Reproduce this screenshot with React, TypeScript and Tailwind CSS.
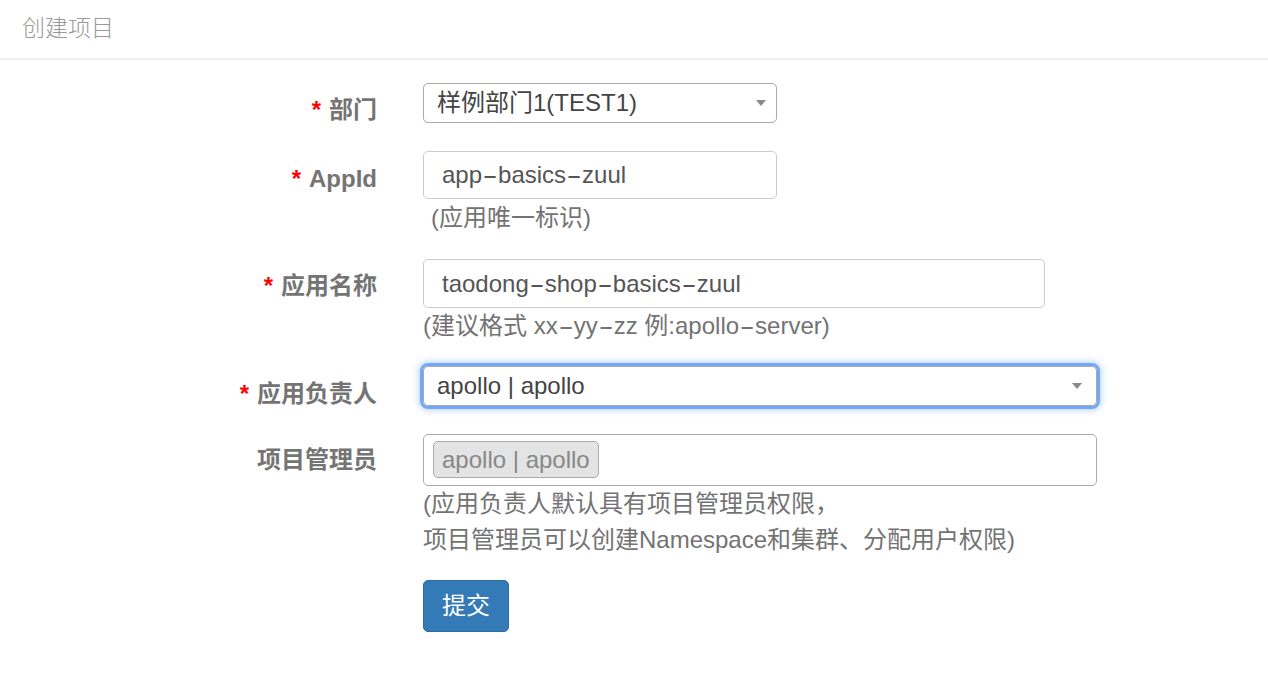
const font = { fontFamily: '"Liberation Sans", "Noto Sans CJK SC", sans-serif' };

// wide dashes, as the reference font draws its hyphens
function Dashy({ text }: { text: string }) {
  const parts = text.split("-");
  return (
    <>
      {parts.map((p, i) => (
        <span key={i}>
          {p}
          {i < parts.length - 1 && <span className="inline-block w-[16px] scale-x-[1.9] text-center">-</span>}
        </span>
      ))}
    </>
  );
}

function Label({ text, required }: { text: string; required?: boolean }) {
  return (
    <div className="w-[377px] shrink-0 text-right text-[24px] font-bold leading-[28px] text-[#747474]">
      {required && <span className="mr-[8px] text-[#f00]">*</span>}
      {text}
    </div>
  );
}

function Arrow() {
  return <span className="h-0 w-0 border-x-[5px] border-t-[6px] border-x-transparent border-t-[#888]" />;
}

function Help({ children }: { children: React.ReactNode }) {
  return <p className="text-[24px] leading-[28px] text-[#737373]">{children}</p>;
}

export default function App() {
  return (
    <div className="min-h-screen bg-white" style={font}>
      <div className="flex h-[60px] items-center border-b-2 border-[#eef0f4] pl-[22px] pb-[2px]">
        <h1 className="text-[23px] font-light text-[#999]">创建项目</h1>
      </div>

      <form className="flex flex-col pt-[23px]">
        <div className="flex">
          <div className="pt-[13px]">
            <Label text="部门" required />
          </div>
          <div className="ml-[46px]">
            <div className="flex h-[40px] w-[354px] items-center justify-between rounded-[5px] border border-[#aaa] pl-[13px] pr-[10px] text-[24px] text-[#444]">
              <span>样例部门1(TEST1)</span>
              <Arrow />
            </div>
          </div>
        </div>

        <div className="mt-[27px] flex">
          <div className="pt-[14px]">
            <Label text="AppId" required />
          </div>
          <div className="ml-[46px]">
            <div className="flex h-[48px] w-[354px] items-center rounded-[5px] border border-[#ccc] pl-[18px] text-[24px] text-[#555]">
              <Dashy text="app-basics-zuul" />
            </div>
            <div className="mt-[5px] pl-[8px]">
              <Help>(应用唯一标识)</Help>
            </div>
          </div>
        </div>

        <div className="mt-[27px] flex">
          <div className="pt-[13px]">
            <Label text="应用名称" required />
          </div>
          <div className="ml-[46px]">
            <div className="flex h-[49px] w-[622px] items-center rounded-[5px] border border-[#ccc] pl-[18px] text-[24px] text-[#555]">
              <Dashy text="taodong-shop-basics-zuul" />
            </div>
            <div className="mt-[4px]">
              <Help>
                (建议格式 <Dashy text="xx-yy-zz" /> 例:<Dashy text="apollo-server" />)
              </Help>
            </div>
          </div>
        </div>

        <div className="mt-[26px] flex">
          <div className="pt-[14px]">
            <Label text="应用负责人" required />
          </div>
          <div className="ml-[46px]">
            <div className="flex h-[40px] w-[674px] items-center justify-between rounded-[5px] border border-[#aaa] pl-[13px] pr-[14px] text-[24px] text-[#444] shadow-[0_0_0_3px_rgba(100,160,245,0.85),0_0_6px_4px_rgba(100,160,245,0.5)]">
              <span>apollo | apollo</span>
              <Arrow />
            </div>
          </div>
        </div>

        <div className="mt-[26px] flex">
          <div className="pt-[12px]">
            <Label text="项目管理员" />
          </div>
          <div className="ml-[46px]">
            <div className="flex h-[52px] w-[674px] items-start rounded-[5px] border border-[#aaa] pl-[9px] pt-[6px]">
              <span className="flex h-[37px] items-center rounded-[5px] border border-[#aaa] bg-[#e4e4e4] px-[8px] text-[24px] text-[#888]">
                apollo | apollo
              </span>
            </div>
            <p className="text-[24px] leading-[36px] text-[#737373]">
              (应用负责人默认具有项目管理员权限，
              <br />
              项目管理员可以创建Namespace和集群、分配用户权限)
            </p>
            <button
              type="button"
              className="mt-[22px] flex h-[52px] w-[86px] items-center justify-center rounded-[5px] border border-[#2e6da4] bg-[#337ab7] text-[24px] text-white"
            >
              提交
            </button>
          </div>
        </div>
      </form>
    </div>
  );
}
